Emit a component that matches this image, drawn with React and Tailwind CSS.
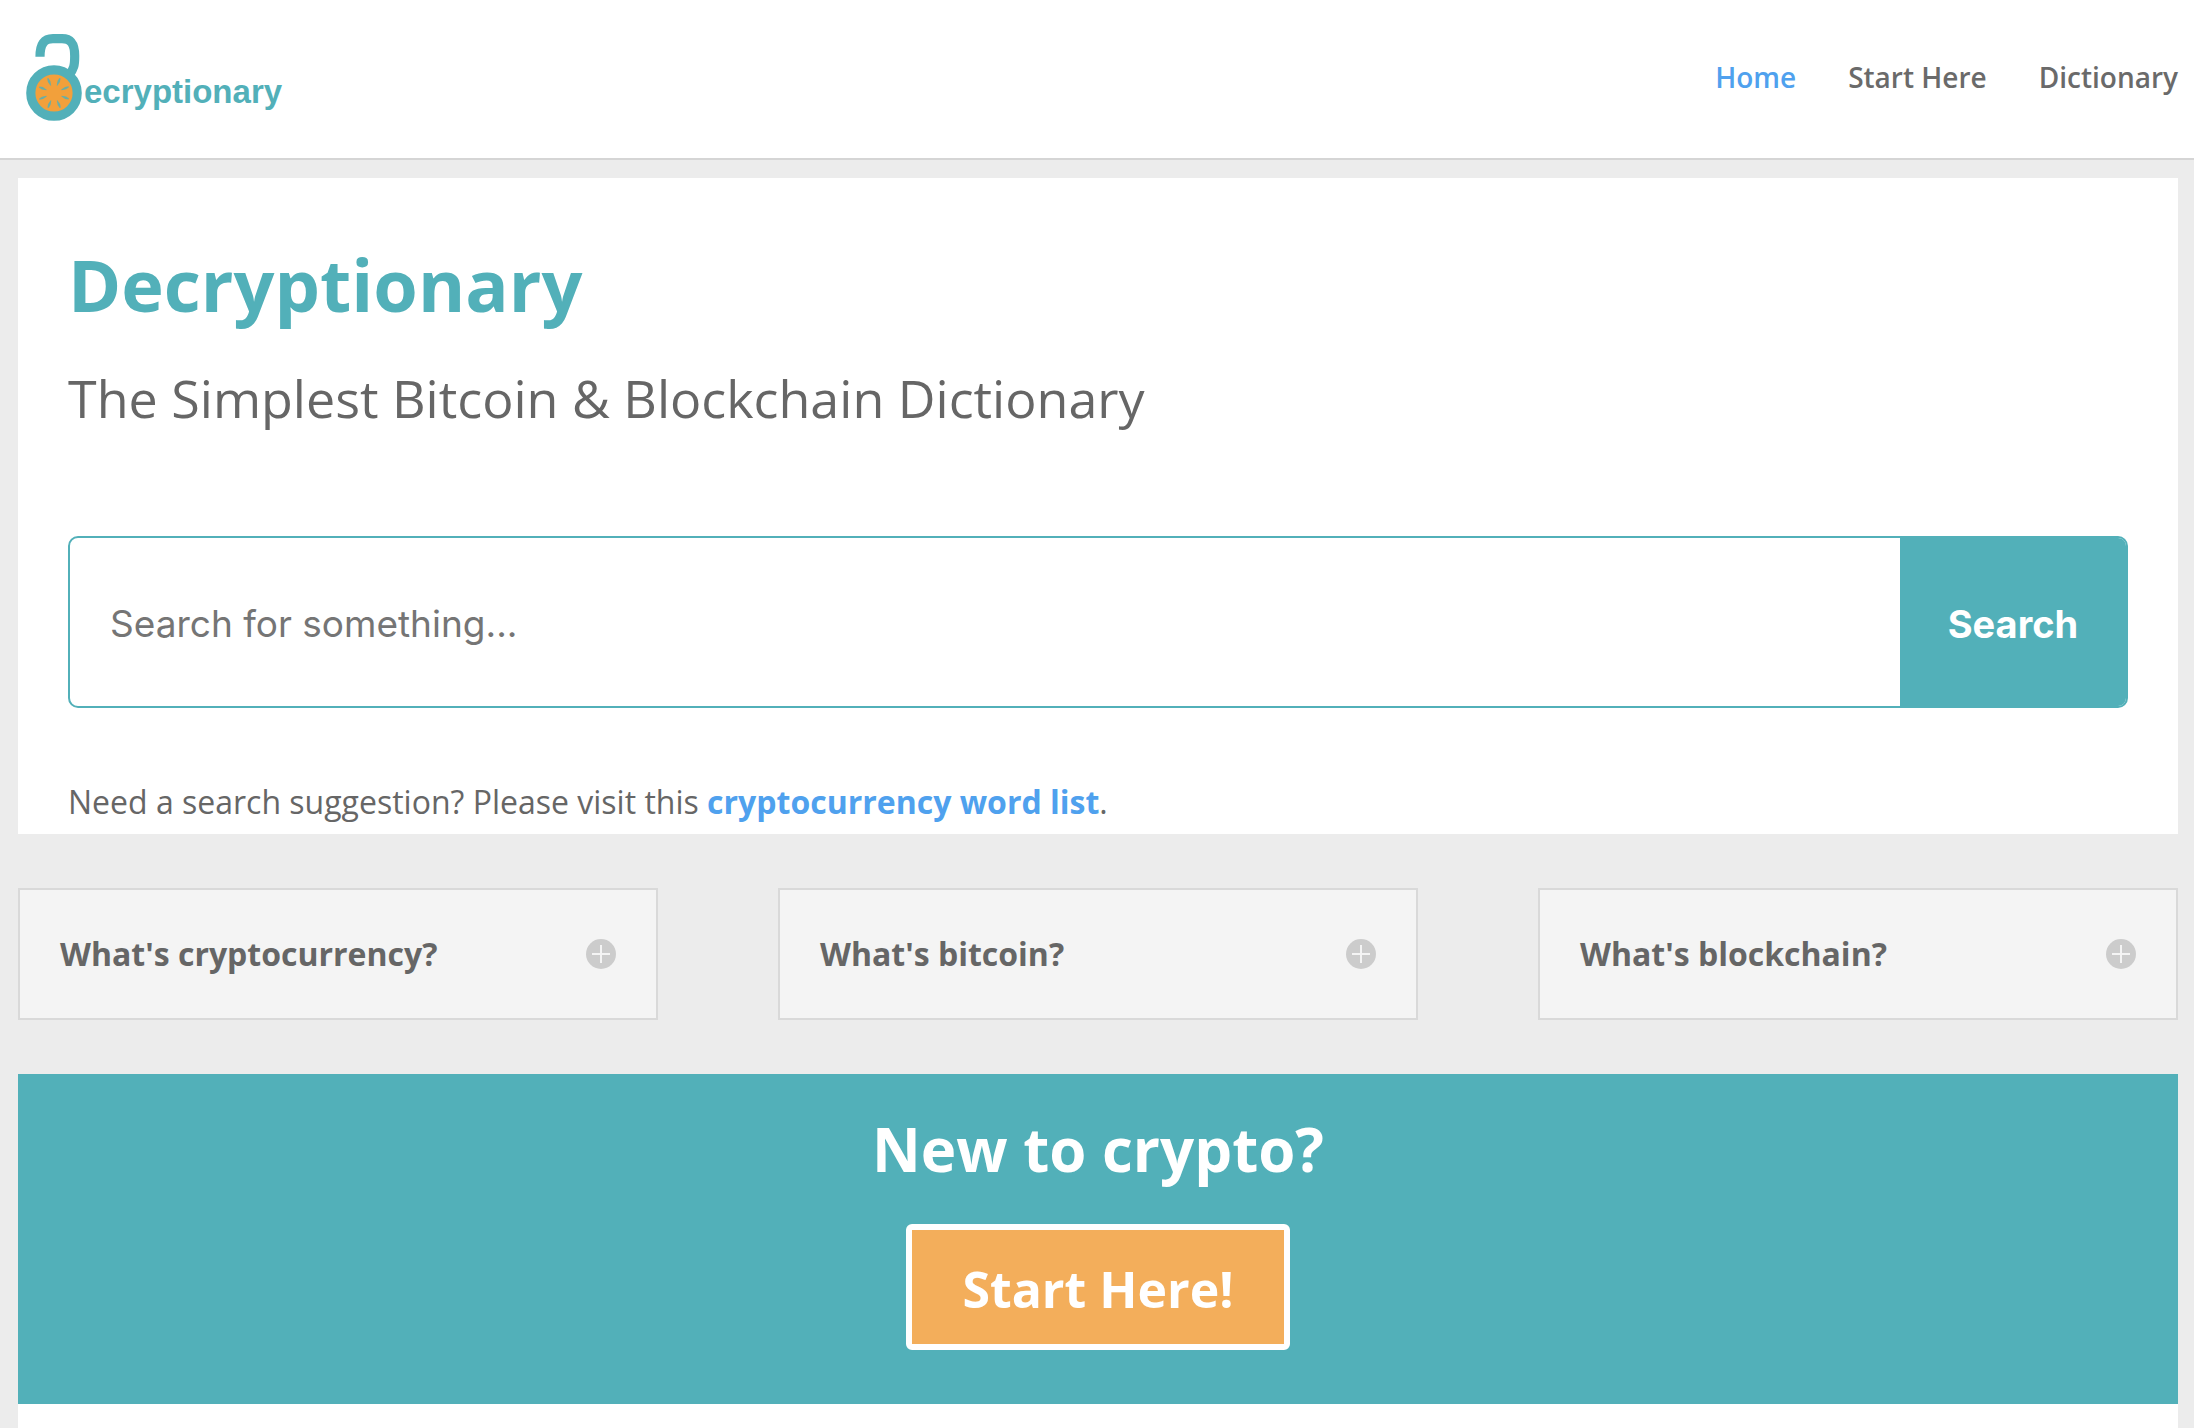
import React from "react";

const navLinks = [
  { label: "Home", href: "#home", color: "text-[#4fa1ee]" },
  { label: "Start Here", href: "#start", color: "text-[#6a6a6a]" },
  { label: "Dictionary", href: "#dictionary", color: "text-[#6a6a6a]" },
];

const questions = ["What's cryptocurrency?", "What's bitcoin?", "What's blockchain?"];

const slices = [22, 67, 112, 157, 202, 247, 292, 337];

function Logo() {
  return (
    <a href="#home" className="flex items-end text-[#52b0b9]">
      <svg viewBox="0 0 56 90" className="h-[90px] w-[56px]" aria-hidden="true">
        <path
          d="M14 24.7 C14 12 18 6.7 27 6.7 H36 C45 6.7 48.7 12 48.7 24 C48.7 33 48 37 43 43"
          fill="none"
          stroke="currentColor"
          strokeWidth="9.2"
        />
        <circle cx="28" cy="61" r="23.2" fill="#f2a03b" stroke="currentColor" strokeWidth="9.2" />
        {slices.map((angle) => (
          <path
            key={angle}
            d="M27.4 45 H28.6 L29.3 48.5 L28.3 53 H27.7 L26.7 48.5 Z"
            fill="currentColor"
            opacity="0.85"
            transform={`rotate(${angle} 28 61)`}
          />
        ))}
      </svg>
      <span className="ml-[2px] pb-[10px] font-['Liberation_Sans',sans-serif] text-[33px] font-bold leading-10">
        ecryptionary
      </span>
    </a>
  );
}

function Header() {
  return (
    <header className="flex h-40 items-center justify-between border-b-2 border-[#d5d5d5] bg-white pb-1 pl-[26px] pr-4">
      <Logo />
      <nav className="flex gap-[52px] text-[28px] font-semibold leading-8">
        {navLinks.map((link) => (
          <a key={link.label} href={link.href} className={link.color}>
            {link.label}
          </a>
        ))}
      </nav>
    </header>
  );
}

function SearchPanel() {
  return (
    <section className="bg-white px-[50px] pb-1 pt-[70px]">
      <h1 className="text-[72px] font-bold leading-[72px] text-[#52b0b9]">Decryptionary</h1>
      <p className="mt-[34px] text-[52px] leading-[88px]">
        The Simplest Bitcoin &amp; Blockchain Dictionary
      </p>
      <form
        className="mt-[94px] flex h-[172px] overflow-hidden rounded-[10px] border-2 border-[#52b0b9] font-['Inter',sans-serif]"
        onSubmit={(e) => e.preventDefault()}
      >
        <input
          type="text"
          aria-label="Search"
          placeholder="Search for something..."
          className="min-w-0 flex-1 px-10 pt-1 text-[37px] outline-none placeholder:text-[#757575]"
        />
        <button
          type="submit"
          className="w-[226px] bg-[#52b0b9] pt-1 text-[38px] font-bold text-white"
        >
          Search
        </button>
      </form>
      <p className="mt-[66px] text-[32px] leading-[56px]">
        Need a search suggestion? Please visit this{" "}
        <a href="#words" className="font-bold text-[#4fa1ee]">
          cryptocurrency word list
        </a>
        .
      </p>
    </section>
  );
}

function Question({ title }) {
  return (
    <button
      type="button"
      className="flex h-[132px] items-center justify-between border-2 border-[#d9d9d9] bg-[#f4f4f4] px-10 text-left text-[32px] font-bold leading-8"
    >
      {title}
      <svg viewBox="0 0 30 30" className="h-[30px] w-[30px]" aria-hidden="true">
        <circle cx="15" cy="15" r="15" fill="#cccccc" />
        <path d="M15 6 V24 M6 15 H24" stroke="#f4f4f4" strokeWidth="2" />
      </svg>
    </button>
  );
}

function App() {
  return (
    <div className="min-h-screen bg-[#ececec] font-['Open_Sans',sans-serif] text-[#666666]">
      <Header />
      <main className="pl-[18px] pr-4 pt-[18px]">
        <SearchPanel />
        <section className="my-[54px] grid grid-cols-3 gap-[120px]">
          {questions.map((title) => (
            <Question key={title} title={title} />
          ))}
        </section>
        <section className="flex flex-col items-center bg-[#52b0b9] pb-[54px] pt-[45px] text-white">
          <h2 className="text-[60px] font-bold leading-[60px]">New to crypto?</h2>
          <a
            href="#start"
            className="mt-[45px] flex h-[126px] items-center rounded-md border-6 border-white bg-[#f3ae5b] px-[50px] pt-1 text-[50px] font-bold"
          >
            Start Here!
          </a>
        </section>
        <section className="h-6 bg-white" />
      </main>
    </div>
  );
}

export default App;
